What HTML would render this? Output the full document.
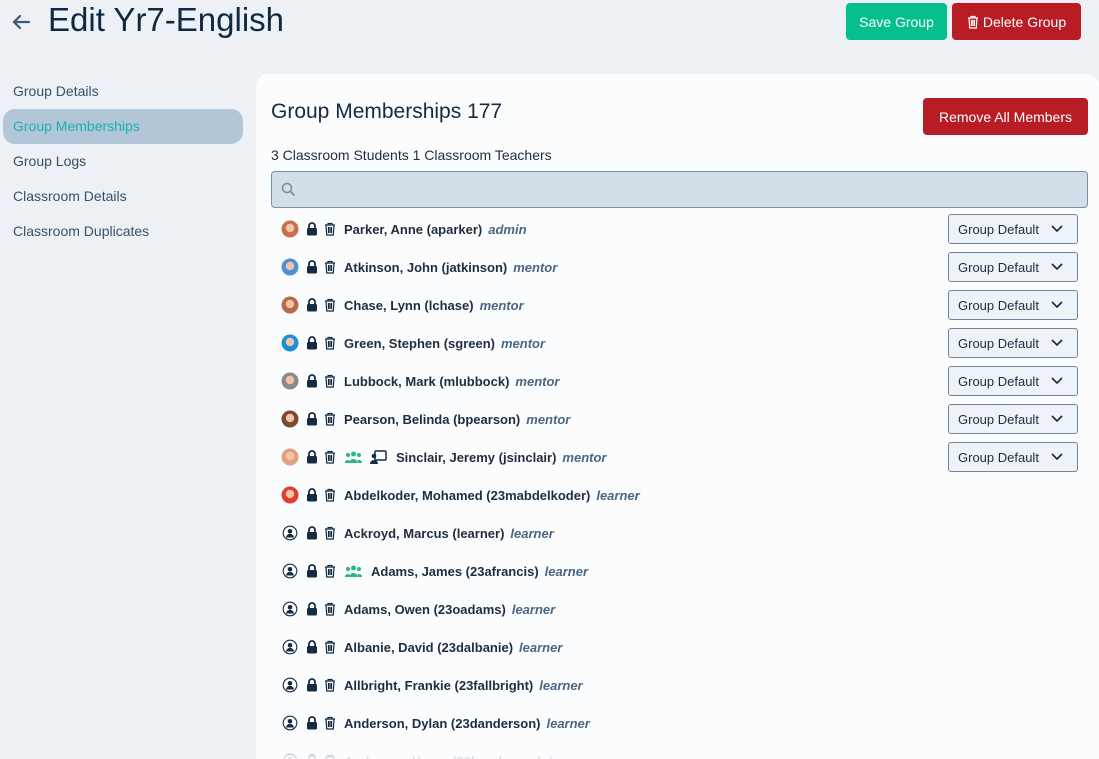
<!DOCTYPE html>
<html><head><style>
*{box-sizing:border-box;margin:0;padding:0}
html,body{width:1099px;height:759px;overflow:hidden}
body{background:#edf1f6;font-family:"Liberation Sans",sans-serif;position:relative;color:#142b40}
.abs{position:absolute}
.btn{position:absolute;border-radius:4px;color:#fff;font-size:14px;display:flex;align-items:center;justify-content:center}
.nav{position:absolute;left:13px;font-size:14px;color:#3a5068}
.panel{position:absolute;left:256px;top:74px;width:843px;height:685px;background:#fbfcfd;border-top-left-radius:12px;border-top-right-radius:12px}
.row{position:absolute;left:280px;height:20px;display:flex;align-items:center;font-size:13px;font-weight:bold;color:#1d2e40;white-space:nowrap}
.row svg{flex:none}
.role{font-style:italic;color:#4b6682;margin-left:6px}
.dd{position:absolute;left:948px;width:130px;height:30px;border:1px solid #6e87a0;border-radius:3px;background:#eef3f8;font-size:13px;color:#1d2e40;padding-left:9px;display:flex;align-items:center}
.dd svg{position:absolute;right:14px;top:10px}
.fade{position:absolute;left:256px;top:735px;width:843px;height:24px;background:linear-gradient(rgba(251,252,253,0),rgba(251,252,253,0.9))}
</style></head><body>
<svg class="abs" style="left:11px;top:13px" width="20" height="18" viewBox="0 0 20 18"><path d="M18 9H3M9 3L3 9l6 6" stroke="#3e5a74" stroke-width="2.2" fill="none" stroke-linecap="round"/></svg>
<div class="abs" style="left:48px;top:1px;font-size:33px;color:#0f2942">Edit Yr7-English</div>
<div class="btn" style="left:846px;top:3px;width:101px;height:37px;background:#05c08c">Save Group</div>
<div class="btn" style="left:952px;top:3px;width:129px;height:37px;background:#b81c25"><svg width="12" height="14" viewBox="0 0 12 14" style="margin-right:4px"><path d="M1 3h10M4 3V1.5h4V3M2 3l.7 10h6.6L10 3M4.5 5v6M6 5v6M7.5 5v6" stroke="#fff" stroke-width="1.2" fill="none"/></svg>Delete Group</div>
<div class="nav" style="top:83px">Group Details</div>
<div class="abs" style="left:3px;top:109px;width:240px;height:35px;background:#b3c6d7;border-radius:12px"></div>
<div class="nav" style="top:118px;color:#14b3b0">Group Memberships</div>
<div class="nav" style="top:153px">Group Logs</div>
<div class="nav" style="top:188px">Classroom Details</div>
<div class="nav" style="top:223px">Classroom Duplicates</div>
<div class="panel"></div>
<div class="abs" style="left:271px;top:100px;font-size:21px;color:#142b40">Group Memberships 177</div>
<div class="btn" style="left:923px;top:98px;width:165px;height:37px;background:#b81c25">Remove All Members</div>
<div class="abs" style="left:271px;top:147px;font-size:14px;color:#1d2e40">3 Classroom Students 1 Classroom Teachers</div>
<div class="abs" style="left:271px;top:171px;width:817px;height:37px;background:#d3dfe8;border:1px solid #7690a8;border-radius:4px"></div>
<svg class="abs" style="left:281px;top:182px" width="15" height="15" viewBox="0 0 15 15"><circle cx="6" cy="6" r="4.5" stroke="#7a8fa3" stroke-width="1.6" fill="none"/><path d="M9.5 9.5l4 4" stroke="#7a8fa3" stroke-width="1.8"/></svg>
<div id="rows"></div>
<script>
const rows=[
["Parker, Anne (aparker)","admin","#c8704a",0,1],
["Atkinson, John (jatkinson)","mentor","#4f8fd6",0,1],
["Chase, Lynn (lchase)","mentor","#b86a4a",0,1],
["Green, Stephen (sgreen)","mentor","#1b8fd6",0,1],
["Lubbock, Mark (mlubbock)","mentor","#8a8a8a",0,1],
["Pearson, Belinda (bpearson)","mentor","#7a4a30",0,1],
["Sinclair, Jeremy (jsinclair)","mentor","#e0a080",2,1],
["Abdelkoder, Mohamed (23mabdelkoder)","learner","#e23c2c",0,0],
["Ackroyd, Marcus (learner)","learner","l",0,0],
["Adams, James (23afrancis)","learner","l",1,0],
["Adams, Owen (23oadams)","learner","l",0,0],
["Albanie, David (23dalbanie)","learner","l",0,0],
["Allbright, Frankie (23fallbright)","learner","l",0,0],
["Anderson, Dylan (23danderson)","learner","l",0,0],
["Anderson, Henry (23handerson)","learner","l",0,0]];
const lock='<svg width="12" height="14" viewBox="0 0 12 14" style="margin-left:6px"><path d="M3 6V4a3 3 0 016 0v2" stroke="#142b40" stroke-width="1.8" fill="none"/><rect x="1" y="6" width="10" height="7.5" rx="1.5" fill="#142b40"/></svg>';
const trash='<svg width="12" height="14" viewBox="0 0 12 14" style="margin-left:6px"><path d="M1 3h10M4 3V1.5h4V3M2 3l.7 10h6.6L10 3M4.5 5v6M6 5v6M7.5 5v6" stroke="#142b40" stroke-width="1.2" fill="none"/></svg>';
const grp='<svg width="17" height="13" viewBox="0 0 17 13" style="margin-left:9px"><circle cx="8.5" cy="3" r="2.5" fill="#2fb389"/><circle cx="3" cy="4" r="2" fill="#2fb389"/><circle cx="14" cy="4" r="2" fill="#2fb389"/><path d="M4.5 12a4 4 0 018 0zM0 11a3 3 0 015 -1v2H0zM17 11a3 3 0 00-5-1v2h5z" fill="#2fb389"/></svg>';
const teach='<svg width="17" height="14" viewBox="0 0 17 14" style="margin-left:8px"><rect x="5" y="1" width="11" height="9" rx="1" stroke="#142b40" stroke-width="1.5" fill="none"/><circle cx="4" cy="6" r="2.3" fill="#142b40"/><path d="M0 14a4 4 0 018 0z" fill="#142b40"/></svg>';
let h='';
rows.forEach((r,i)=>{const y=219+i*38;
let av=r[2]=='l'?'<svg width="20" height="20" viewBox="0 0 20 20"><circle cx="10" cy="10" r="6.8" stroke="#142b40" stroke-width="1.1" fill="#fff"/><circle cx="10" cy="8.3" r="2.3" fill="#142b40"/><path d="M6 14.5a4 3.6 0 018 0z" fill="#142b40"/></svg>':'<svg width="20" height="20" viewBox="0 0 20 20"><circle cx="10" cy="10" r="8.5" fill="'+r[2]+'"/><circle cx="10" cy="9" r="4.2" fill="#f2c4a8"/></svg>';
let ex=r[3]==1?grp:r[3]==2?grp+teach:'';
h+='<div class="row" style="top:'+y+'px">'+av+lock+trash+ex+'<span style="margin-left:'+(r[3]?9:8)+'px">'+r[0]+'</span><span class="role">'+r[1]+'</span></div>';
if(r[4])h+='<div class="dd" style="top:'+(y-5)+'px">Group Default<svg width="12" height="8" viewBox="0 0 12 8"><path d="M1 1l5 5 5-5" stroke="#142b40" stroke-width="1.6" fill="none"/></svg></div>';
});
document.getElementById('rows').innerHTML=h;
</script>
<div class="fade"></div>
</body></html>
